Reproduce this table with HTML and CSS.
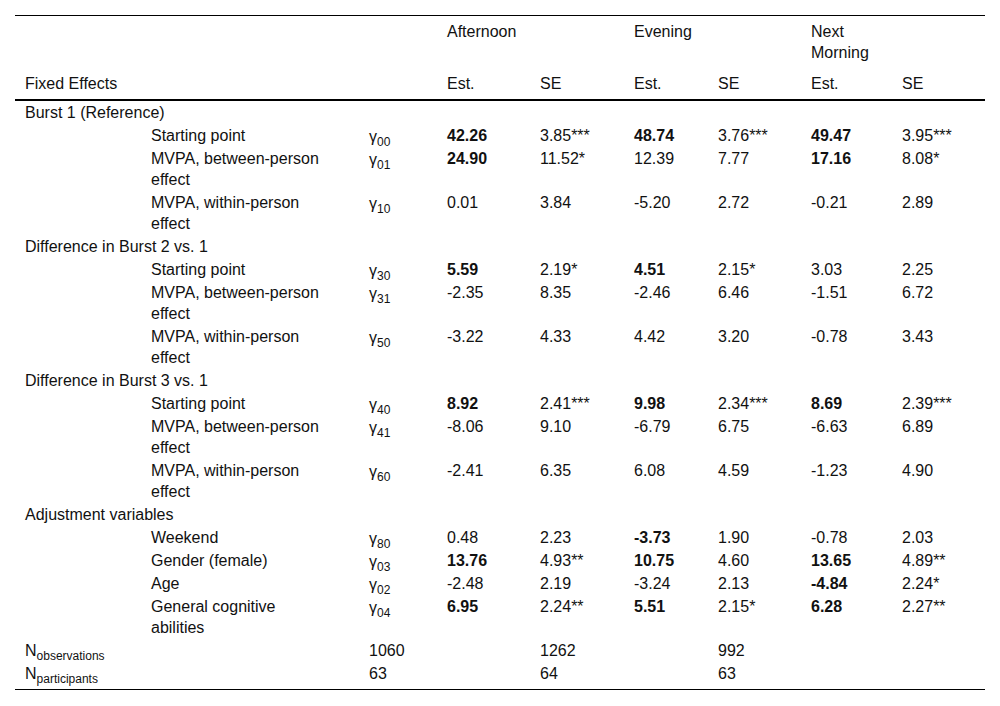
FILE: index.html
```html
<!DOCTYPE html>
<html>
<head>
<meta charset="utf-8">
<link rel="stylesheet" href="styles.css">
</head>
<body>
<table class="results">
  <colgroup>
    <col class="c1"><col class="c2"><col class="c3"><col class="c4"><col class="c5"><col class="c6"><col class="c7"><col class="c8"><col class="c9">
  </colgroup>
  <thead>
    <tr class="h1">
      <th></th><th></th><th></th>
      <th>Afternoon</th><th></th>
      <th>Evening</th><th></th>
      <th>Next<br>Morning</th><th></th>
    </tr>
    <tr class="h2">
      <th>Fixed Effects</th><th></th><th></th>
      <th>Est.</th><th>SE</th><th>Est.</th><th>SE</th><th>Est.</th><th>SE</th>
    </tr>
  </thead>
  <tbody>
    <tr><td colspan="2">Burst 1 (Reference)</td><td></td><td></td><td></td><td></td><td></td><td></td><td></td></tr>
    <tr><td></td><td>Starting point</td><td class="g">γ<sub>00</sub></td><td class="b">42.26</td><td>3.85***</td><td class="b">48.74</td><td>3.76***</td><td class="b">49.47</td><td>3.95***</td></tr>
    <tr><td></td><td>MVPA, between-person<br>effect</td><td class="g">γ<sub>01</sub></td><td class="b">24.90</td><td>11.52*</td><td>12.39</td><td>7.77</td><td class="b">17.16</td><td>8.08*</td></tr>
    <tr><td></td><td>MVPA, within-person<br>effect</td><td class="g">γ<sub>10</sub></td><td>0.01</td><td>3.84</td><td>-5.20</td><td>2.72</td><td>-0.21</td><td>2.89</td></tr>

    <tr><td colspan="2">Difference in Burst 2 vs. 1</td><td></td><td></td><td></td><td></td><td></td><td></td><td></td></tr>
    <tr><td></td><td>Starting point</td><td class="g">γ<sub>30</sub></td><td class="b">5.59</td><td>2.19*</td><td class="b">4.51</td><td>2.15*</td><td>3.03</td><td>2.25</td></tr>
    <tr><td></td><td>MVPA, between-person<br>effect</td><td class="g">γ<sub>31</sub></td><td>-2.35</td><td>8.35</td><td>-2.46</td><td>6.46</td><td>-1.51</td><td>6.72</td></tr>
    <tr><td></td><td>MVPA, within-person<br>effect</td><td class="g">γ<sub>50</sub></td><td>-3.22</td><td>4.33</td><td>4.42</td><td>3.20</td><td>-0.78</td><td>3.43</td></tr>

    <tr><td colspan="2">Difference in Burst 3 vs. 1</td><td></td><td></td><td></td><td></td><td></td><td></td><td></td></tr>
    <tr><td></td><td>Starting point</td><td class="g">γ<sub>40</sub></td><td class="b">8.92</td><td>2.41***</td><td class="b">9.98</td><td>2.34***</td><td class="b">8.69</td><td>2.39***</td></tr>
    <tr><td></td><td>MVPA, between-person<br>effect</td><td class="g">γ<sub>41</sub></td><td>-8.06</td><td>9.10</td><td>-6.79</td><td>6.75</td><td>-6.63</td><td>6.89</td></tr>
    <tr><td></td><td>MVPA, within-person<br>effect</td><td class="g">γ<sub>60</sub></td><td>-2.41</td><td>6.35</td><td>6.08</td><td>4.59</td><td>-1.23</td><td>4.90</td></tr>

    <tr><td colspan="2">Adjustment variables</td><td></td><td></td><td></td><td></td><td></td><td></td><td></td></tr>
    <tr><td></td><td>Weekend</td><td class="g">γ<sub>80</sub></td><td>0.48</td><td>2.23</td><td class="b">-3.73</td><td>1.90</td><td>-0.78</td><td>2.03</td></tr>
    <tr><td></td><td>Gender (female)</td><td class="g">γ<sub>03</sub></td><td class="b">13.76</td><td>4.93**</td><td class="b">10.75</td><td>4.60</td><td class="b">13.65</td><td>4.89**</td></tr>
    <tr><td></td><td>Age</td><td class="g">γ<sub>02</sub></td><td>-2.48</td><td>2.19</td><td>-3.24</td><td>2.13</td><td class="b">-4.84</td><td>2.24*</td></tr>
    <tr><td></td><td>General cognitive<br>abilities</td><td class="g">γ<sub>04</sub></td><td class="b">6.95</td><td>2.24**</td><td class="b">5.51</td><td>2.15*</td><td class="b">6.28</td><td>2.27**</td></tr>

    <tr class="n"><td>N<sub>observations</sub></td><td></td><td>1060</td><td></td><td>1262</td><td></td><td>992</td><td></td><td></td></tr>
    <tr class="n last"><td>N<sub>participants</sub></td><td></td><td>63</td><td></td><td>64</td><td></td><td>63</td><td></td><td></td></tr>
  </tbody>
</table>
</body>
</html>
```

FILE: styles.css
```css
html, body {
  margin: 0;
  padding: 0;
  background: #ffffff;
}

body {
  font-family: "Liberation Sans", Arial, sans-serif;
  font-size: 16px;
  color: #111111;
}

.results {
  margin: 15px 0 0 15px;
  width: 970px;
  border-collapse: collapse;
  table-layout: fixed;
  border-top: 1px solid #000;
  border-bottom: 1px solid #000;
}

.c1 { width: 126px; }
.c2 { width: 218px; }
.c3 { width: 78px; }
.c4 { width: 93px; }
.c5 { width: 94px; }
.c6 { width: 84px; }
.c7 { width: 93px; }
.c8 { width: 91px; }
.c9 { width: 93px; }

.results th,
.results td {
  text-align: left;
  vertical-align: top;
  font-weight: normal;
  padding: 1px 0 1px 10px;
  line-height: 21px;
  white-space: nowrap;
}

.results thead th {
  padding-top: 5px;
  padding-bottom: 5px;
}

.results thead tr.h2 th {
  border-bottom: 2px solid #000;
}

.results td.b {
  font-weight: bold;
}

.results sub {
  font-size: 12px;
  line-height: 0;
  vertical-align: -4px;
}

.results td.g {
  padding-top: 2px;
  padding-bottom: 0;
}

.results tr.last td {
  padding-bottom: 5px;
}
```
